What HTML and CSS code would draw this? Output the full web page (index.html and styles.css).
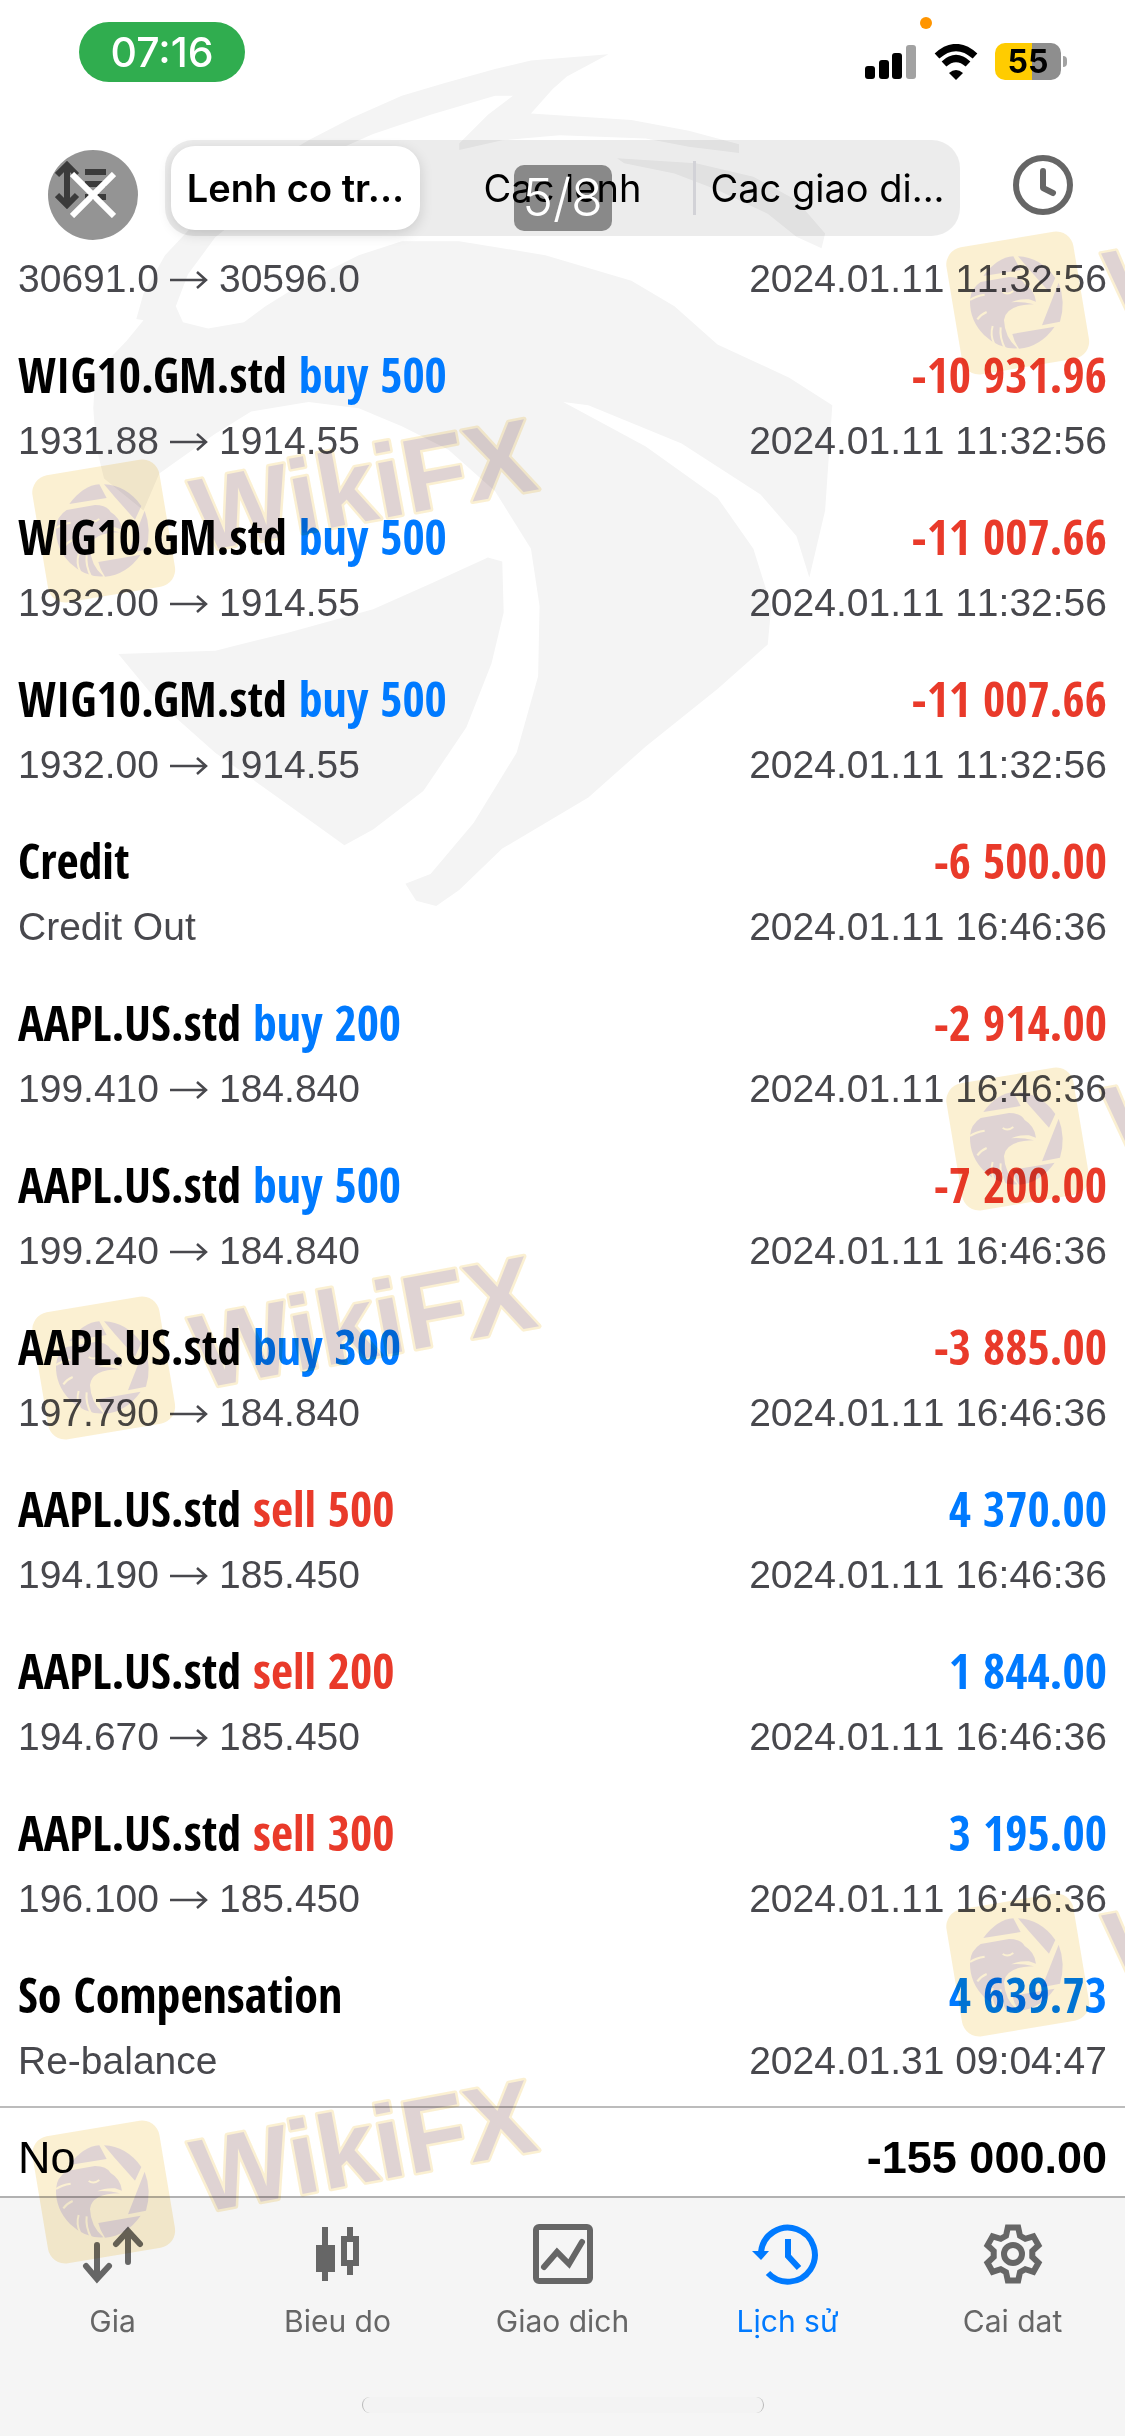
FILE: index.html
```
<!DOCTYPE html>
<html lang="vi">
<head>
<meta charset="utf-8">
<meta name="viewport" content="width=device-width, initial-scale=1">
<title>Lịch sử</title>
<link rel="stylesheet" href="styles.css">
</head>
<body>
<svg class="defs" aria-hidden="true">
  <symbol id="arrow" viewBox="0 0 38 20"><path d="M0 10H36M27 2L36 10L27 18" fill="none" stroke="currentColor" stroke-width="2.5"/></symbol>
  <symbol id="stamp" viewBox="0 0 540 240">
    <g transform="translate(0 70) scale(.3333)">
      <rect x="58" y="56" width="386" height="386" rx="52" fill="#efc34b" transform="rotate(-9.5 252 248)"/>
      <g fill="#7f4f4f">
        <path d="M148 168Q190 112 238 109L260 150Z"/>
        <path d="M252 109Q320 112 364 174L345 215L285 148Z"/>
        <path d="M374 188Q396 245 378 305L324 316Z"/>
        <path d="M362 320Q320 380 255 386Q240 365 235 342Z"/>
        <path d="M108 240Q110 205 140 186L225 171Q260 171 272 192Q302 210 306 245L285 238Q255 236 232 247Q262 244 300 253Q215 254 210 300Q212 352 250 385Q195 388 150 345Q106 300 108 240Z"/>
      </g>
      <g fill="none" stroke="#efc34b" stroke-width="6">
        <path d="M206 216Q222 226 238 213M108 240Q125 228 152 224M130 298Q140 284 158 276M180 370Q168 345 176 318M214 388Q196 352 200 322"/>
      </g>
    </g>
    <text class="stamp-text" x="180" y="174" transform="rotate(-10.5 180 174)">WikiFX</text>
  </symbol>
</svg>

<div class="screen">
  <svg class="emblem" viewBox="0 0 1125 1000" aria-hidden="true">
    <g transform="scale(.7175 .638)">
      <path d="M848 85L740 95L690 108L620 130L560 150L490 185L430 220L340 280L280 340L230 400L200 460L190 500L200 502L176 535L133 585L130 640L134 700L145 750L200 800L222 742L300 680L350 645L430 630L500 640L560 668L625 705L690 770L740 860L752 950L750 1060L720 1180L660 1290L600 1370L565 1385L580 1412L608 1420L640 1395L700 1330L820 1250L900 1170L1000 1080L1070 1010L1075 950L1050 860L1000 780L900 700L785 630L820 635L950 695L1060 775L1110 840L1128 905L1150 800L1160 635L1100 592L1000 540L940 480L880 440L760 400L640 378L560 378L500 400L420 445L370 480L340 505L290 515L255 505L245 480L262 430L300 372L380 300L440 250L520 210L600 180L690 150L715 150L680 180L640 225L640 235L700 220L780 212L900 217L960 230L1030 240L1030 226L960 205L880 188L740 178L770 140L790 120Z"/>
      <path d="M860 248L970 256L1050 277L1110 314L1150 366L1145 389L1110 371L1070 335L1000 298L940 272L870 256Z"/>
      <path d="M165 1025L300 1020L400 992L520 955L600 915L680 874L700 880L702 960L685 1040L650 1140L590 1240L520 1300L480 1325L400 1260L300 1180L220 1100Z"/>
    </g>
  </svg>

  <header class="top">
    <div class="status">
      <span class="clock">07:16</span>
      <div class="status-icons">
        <svg width="52" height="34" viewBox="0 0 52 34" aria-label="Signal"><rect y="21" width="10" height="13" rx="3"/><rect x="14" y="15" width="10" height="19" rx="3"/><rect x="27" y="8" width="10" height="26" rx="3"/><rect x="41" width="10" height="34" rx="3" fill="#a2a2a2"/></svg>
        <svg width="44" height="36" viewBox="0 0 44 36" aria-label="Wi-Fi"><path d="M3 12Q22-5 41 12" fill="none" stroke="#000" stroke-width="7"/><path d="M10 20Q22 9 34 20" fill="none" stroke="#000" stroke-width="7"/><path d="M22 36L15 29Q22 23 29 29Z"/></svg>
        <span class="battery">55</span>
      </div>
      <i class="mic-dot"></i>
    </div>
    <nav class="toolbar">
      <button class="icon-btn sort" aria-label="Sort"><svg width="52" height="48" viewBox="0 0 52 48" fill="none" stroke="#666" stroke-width="6"><path d="M12 4V44M2 14L12 4L22 14M2 34L12 44L22 34M30 11H51M30 23H51M30 36H51"/></svg></button>
      <div class="segments">
        <button class="segment selected">Lenh co tr...</button>
        <button class="segment">Cac lenh</button>
        <button class="segment ruled">Cac giao di...</button>
      </div>
      <button class="icon-btn" aria-label="Period"><svg width="60" height="60" viewBox="0 0 60 60" fill="none" stroke="#666" stroke-width="6"><circle cx="30" cy="30" r="27"/><path d="M30 16V33L40 38" stroke-linecap="round" stroke-linejoin="round"/></svg></button>
    </nav>
    <button class="close" aria-label="Close"><svg width="46" height="46" viewBox="0 0 46 46" stroke="#fff" stroke-width="6"><path d="M2 2L44 44M44 2L2 44"/></svg></button>
    <span class="counter">5/8</span>
  </header>

  <main>
    <ul class="deals">
      <li class="deal cut"><span class="note">30691.0<svg class="to"><use href="#arrow"/></svg>30596.0</span><time>2024.01.11 11:32:56</time></li>
      <li class="deal"><b>WIG10.GM.std <span class="buy">buy 500</span></b><strong class="loss">-10 931.96</strong><span class="note">1931.88<svg class="to"><use href="#arrow"/></svg>1914.55</span><time>2024.01.11 11:32:56</time></li>
      <li class="deal"><b>WIG10.GM.std <span class="buy">buy 500</span></b><strong class="loss">-11 007.66</strong><span class="note">1932.00<svg class="to"><use href="#arrow"/></svg>1914.55</span><time>2024.01.11 11:32:56</time></li>
      <li class="deal"><b>WIG10.GM.std <span class="buy">buy 500</span></b><strong class="loss">-11 007.66</strong><span class="note">1932.00<svg class="to"><use href="#arrow"/></svg>1914.55</span><time>2024.01.11 11:32:56</time></li>
      <li class="deal"><b>Credit</b><strong class="loss">-6 500.00</strong><span class="note">Credit Out</span><time>2024.01.11 16:46:36</time></li>
      <li class="deal"><b>AAPL.US.std <span class="buy">buy 200</span></b><strong class="loss">-2 914.00</strong><span class="note">199.410<svg class="to"><use href="#arrow"/></svg>184.840</span><time>2024.01.11 16:46:36</time></li>
      <li class="deal"><b>AAPL.US.std <span class="buy">buy 500</span></b><strong class="loss">-7 200.00</strong><span class="note">199.240<svg class="to"><use href="#arrow"/></svg>184.840</span><time>2024.01.11 16:46:36</time></li>
      <li class="deal"><b>AAPL.US.std <span class="buy">buy 300</span></b><strong class="loss">-3 885.00</strong><span class="note">197.790<svg class="to"><use href="#arrow"/></svg>184.840</span><time>2024.01.11 16:46:36</time></li>
      <li class="deal"><b>AAPL.US.std <span class="sell">sell 500</span></b><strong class="gain">4 370.00</strong><span class="note">194.190<svg class="to"><use href="#arrow"/></svg>185.450</span><time>2024.01.11 16:46:36</time></li>
      <li class="deal"><b>AAPL.US.std <span class="sell">sell 200</span></b><strong class="gain">1 844.00</strong><span class="note">194.670<svg class="to"><use href="#arrow"/></svg>185.450</span><time>2024.01.11 16:46:36</time></li>
      <li class="deal"><b>AAPL.US.std <span class="sell">sell 300</span></b><strong class="gain">3 195.00</strong><span class="note">196.100<svg class="to"><use href="#arrow"/></svg>185.450</span><time>2024.01.11 16:46:36</time></li>
      <li class="deal"><b>So Compensation</b><strong class="gain">4 639.73</strong><span class="note">Re-balance</span><time>2024.01.31 09:04:47</time></li>
    </ul>
    <div class="total"><span>No</span><b>-155 000.00</b></div>
  </main>

  <footer class="bottom">
    <nav class="tabs">
      <a class="tab" href="#gia"><svg viewBox="0 0 60 60" fill="none" stroke="currentColor" stroke-width="6" stroke-linecap="round"><path d="M14 21V54M3 42L14 55L26 42M45 38V7M33 20L45 7L57 20"/></svg>Gia</a>
      <a class="tab" href="#bieu-do"><svg viewBox="0 0 60 60" fill="currentColor"><path d="M14 3H20V21H27V48H20V57H14V48H8V21H14ZM39 3H45V12H51V42H45V51H39V42H33V12H39ZM39 18V36H45V18Z" fill-rule="evenodd"/></svg>Bieu do</a>
      <a class="tab" href="#giao-dich"><svg viewBox="0 0 60 60" fill="none" stroke="currentColor" stroke-width="6"><rect x="3" y="3" width="54" height="54" rx="3"/><path d="M11 43L24 28L36 40L49 18" stroke-width="6" stroke-linecap="round"/></svg>Giao dich</a>
      <a class="tab current" href="#lich-su"><svg viewBox="0 0 60 60" fill="none" stroke="currentColor" stroke-width="6"><path d="M3 28A27 27 0 1 1 10 49M30 15V32L41 44"/><path d="M-6 27H11L3 36Z" fill="currentColor" stroke="none"/></svg>Lịch sử</a>
      <a class="tab" href="#cai-dat"><svg viewBox="0 0 60 60" fill="none" stroke="currentColor" stroke-width="6"><path d="M23 11.8L24.8 3.5H35.2L37 11.8L42.3 14.8L50.4 12.3L55.5 21.3L49.3 27V33L55.5 38.8L50.4 47.8L42.3 45.2L37 48.2L35.2 56.5H24.8L23 48.2L17.7 45.2L9.6 47.8L4.5 38.8L10.7 33V27L4.5 21.3L9.6 12.3L17.7 14.8Z"/><circle cx="30" cy="30" r="9"/></svg>Cai dat</a>
    </nav>
    <div class="home-bar"></div>
  </footer>

  <svg class="stamp l1" aria-hidden="true"><use href="#stamp"/></svg>
  <svg class="stamp l2" aria-hidden="true"><use href="#stamp"/></svg>
  <svg class="stamp l3" aria-hidden="true"><use href="#stamp"/></svg>
  <svg class="stamp r1" aria-hidden="true"><use href="#stamp"/></svg>
  <svg class="stamp r2" aria-hidden="true"><use href="#stamp"/></svg>
  <svg class="stamp r3" aria-hidden="true"><use href="#stamp"/></svg>
</div>
</body>
</html>
```
FILE: styles.css
```
* { box-sizing: border-box; }
body {
  margin: 0;
  background: #fff;
  color: #000;
  font-family: "Liberation Sans", Arial, sans-serif;
}
button {
  padding: 0;
  border: 0;
  background: none;
  color: inherit;
  font: inherit;
}
.defs { position: absolute; width: 0; height: 0; }
.screen { position: relative; overflow: hidden; isolation: isolate; background: #fff; }

/* Watermarks */
.emblem {
  position: absolute;
  z-index: -1;
  top: 0;
  left: 0;
  width: 100%;
  fill: #f4f4f4;
}
.stamp {
  position: absolute;
  width: 540px;
  height: 240px;
  opacity: .25;
  mix-blend-mode: multiply;
  pointer-events: none;
}
.stamp-text {
  font-size: 104px;
  font-weight: 700;
  fill: #7f4f4f;
  stroke: #efc34b;
  stroke-width: 5px;
  stroke-linejoin: round;
  paint-order: stroke;
}
.l1, .l2, .l3 { left: 20px; }
.r1, .r2, .r3 { left: 934px; }
.l1 { top: 378px; }
.l2 { top: 1215px; }
.l3 { top: 2039px; }
.r1 { top: 150px; }
.r2 { top: 986px; }
.r3 { top: 1812px; }

/* Header */
.top { position: relative; height: 247px; font-family: Inter, sans-serif; }
.status {
  position: relative;
  display: flex;
  justify-content: space-between;
  align-items: flex-start;
  height: 140px;
  padding: 22px 64px 0 79px;
}
.clock {
  width: 166px;
  border-radius: 30px;
  background: #30ad4f;
  color: #fff;
  font-size: 41px;
  font-weight: 500;
  line-height: 60px;
  text-align: center;
}
.status-icons { display: flex; align-items: center; gap: 17px; padding-top: 21px; }
.battery {
  position: relative;
  width: 66px;
  border-radius: 10px;
  background: linear-gradient(90deg, #ffcc00 56%, #8e8e8e 56%);
  font-size: 32px;
  font-weight: 700;
  line-height: 37px;
  text-align: center;
}
.battery::after {
  content: "";
  position: absolute;
  top: 13px;
  right: -6px;
  width: 4px;
  height: 11px;
  border-radius: 0 4px 4px 0;
  background: #a2a2a2;
}
.mic-dot {
  position: absolute;
  top: 17px;
  right: 193px;
  width: 12px;
  height: 12px;
  border-radius: 50%;
  background: #ff9500;
}
.toolbar { display: grid; grid-template-columns: 165px 1fr 165px; align-items: center; }
.icon-btn { display: flex; justify-content: center; padding-bottom: 6px; }
.sort { padding-right: 4px; }
.segments {
  display: grid;
  grid-template-columns: repeat(3, 1fr);
  height: 96px;
  padding: 6px;
  border-radius: 28px;
  background: rgba(0, 0, 0, .075);
}
.segment { position: relative; font-size: 38px; white-space: nowrap; }
.segment.selected {
  margin-right: 12px;
  border-radius: 24px;
  background: #fff;
  box-shadow: 0 4px 14px rgba(0, 0, 0, .14);
  font-weight: 600;
}
.segment.ruled { padding-left: 8px; }
.ruled::before {
  content: "";
  position: absolute;
  top: 15px;
  left: 0;
  width: 3px;
  height: 54px;
  background: #d2d2d7;
}
.close {
  position: absolute;
  top: 150px;
  left: 48px;
  display: flex;
  align-items: center;
  justify-content: center;
  width: 90px;
  height: 90px;
  border-radius: 50%;
  background: rgba(0, 0, 0, .42);
}
.counter {
  position: absolute;
  top: 165px;
  left: 50%;
  width: 98px;
  margin-left: -49px;
  border-radius: 10px;
  background: rgba(0, 0, 0, .42);
  color: #fff;
  font-size: 52px;
  font-weight: 300;
  line-height: 66px;
  text-align: center;
}

/* Deal history */
.deals { margin: 0; padding: 0; list-style: none; }
.deal {
  display: grid;
  grid-template-columns: 1fr auto;
  padding: 17px 18px 13px;
  font-size: 39px;
  line-height: 64px;
  color: #48484d;
  font-kerning: none;
}
.deal.cut { padding-top: 0; }
.deal b, .deal strong {
  font-family: "Avenir Next Condensed", "Open Sans Condensed", sans-serif;
  font-size: 48px;
  font-weight: 700;
  line-height: 68px;
}
.deal b { color: #000; font-kerning: normal; }
.deal strong, .deal time { text-align: right; }
.deal .loss, .sell { color: #e93a2a; }
.deal .gain, .buy { color: #007aff; }
.to { width: 38px; height: 20px; margin: 0 11px 2px; }
.total {
  display: flex;
  justify-content: space-between;
  align-items: center;
  height: 90px;
  padding: 12px 18px 0;
  border-top: 2px solid #bcbcbc;
  font-size: 45px;
}

/* Tab bar */
.bottom {
  height: 240px;
  padding-top: 26px;
  border-top: 2px solid #b2b2b2;
  background: #f5f5f5;
  font-family: Inter, sans-serif;
}
.tabs { display: grid; grid-template-columns: repeat(5, 1fr); }
.tab {
  display: flex;
  flex-direction: column;
  align-items: center;
  gap: 17px;
  color: #666;
  font-size: 30px;
  line-height: 40px;
  text-decoration: none;
}
.tab svg { width: 60px; height: 60px; overflow: visible; }
.tab.current { color: #007aff; }
.home-bar {
  width: 402px;
  height: 16px;
  margin: 56px auto 0;
  border: 1px solid #b8b8b8;
  border-width: 0 1px;
  border-radius: 8px;
  background: #f3f3f3;
}
```
